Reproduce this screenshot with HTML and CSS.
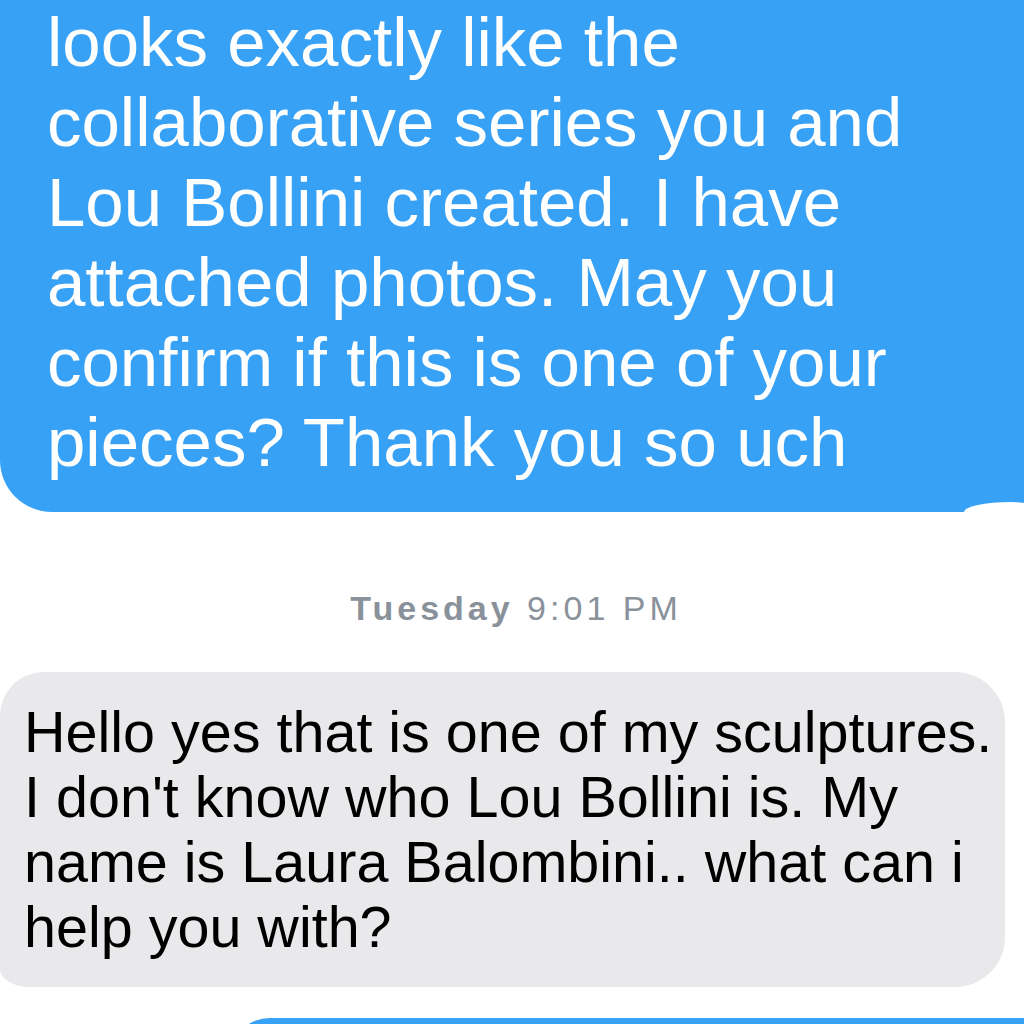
FILE: index.html
```html
<!DOCTYPE html>
<html lang="en">
<head>
<meta charset="utf-8">
<title>Messages</title>
<link rel="stylesheet" href="styles.css">
</head>
<body>
<div class="thread">
  <div class="bubble bubble-out">
    <p class="msg-text">looks exactly like the<br>collaborative series you and<br>Lou Bollini created. I have<br>attached photos. May you<br>confirm if this is one of your<br>pieces? Thank you so uch</p>
    <span class="tail-notch"></span>
  </div>
  <div class="timestamp"><b>Tuesday</b> 9:01 PM</div>
  <div class="bubble bubble-in">
    <p class="msg-text">Hello yes that is one of my sculptures.<br>I don't know who Lou Bollini is. My<br>name is Laura Balombini.. what can i<br>help you with?</p>
  </div>
  <div class="bubble bubble-out bubble-next"></div>
</div>
</body>
</html>
```
FILE: styles.css
```css
html, body {
  margin: 0;
  padding: 0;
  background: #ffffff;
  overflow: hidden;
  height: 1024px;
}
.thread {
  display: flex;
  flex-direction: column;
  align-items: flex-start;
  width: 1024px;
  height: 1024px;
  overflow: hidden;
  font-family: "Liberation Sans", Arial, sans-serif;
}
.msg-text {
  margin: 0;
  white-space: nowrap;
}
.bubble-out {
  position: relative;
  background: #37a1f6;
  color: #ffffff;
  width: 1120px;
  margin-top: -40px;
  padding: 43px 0 29px 47px;
  box-sizing: border-box;
  border-radius: 0 0 52px 52px;
  font-size: 69px;
  line-height: 80px;
  flex-shrink: 0;
}
.tail-notch {
  position: absolute;
  left: 964px;
  bottom: 0;
  width: 78px;
  height: 10px;
  background: #ffffff;
  border-radius: 60% 40% 0 0 / 100% 100% 0 0;
}
.timestamp {
  align-self: stretch;
  text-align: center;
  margin-top: 76px;
  padding-left: 8px;
  font-size: 34px;
  line-height: 40px;
  letter-spacing: 4px;
  color: #89919a;
  flex-shrink: 0;
}
.timestamp b {
  font-weight: 700;
}
.bubble-in {
  margin-top: 44px;
  width: 1005px;
  box-sizing: border-box;
  padding: 28px 0 27px 24px;
  background: #e9e9eb;
  color: #000000;
  border-radius: 44px 50px 50px 30px / 44px 50px 50px 18px;
  font-size: 57.5px;
  line-height: 65px;
  flex-shrink: 0;
}
.bubble-next {
  margin-top: 31px;
  margin-left: 230px;
  width: 900px;
  height: 80px;
  padding: 0;
  border-radius: 46px;
}
```
